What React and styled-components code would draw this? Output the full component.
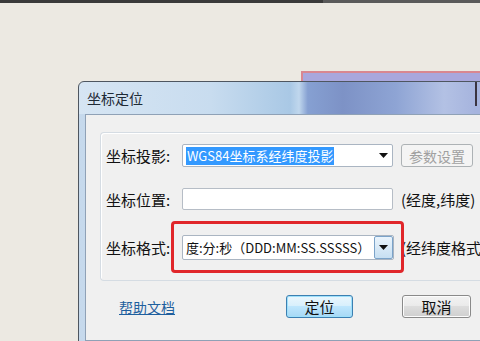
import React from "react";
import styled, { createGlobalStyle } from "styled-components";

const Global = createGlobalStyle`
  html, body { margin: 0; padding: 0; }
  body {
    width: 480px; height: 341px; overflow: hidden;
    background: #ece9e2;
    font-family: "Noto Sans CJK SC", "Microsoft YaHei", sans-serif;
  }
`;

const Desktop = styled.div`
  position: relative;
  width: 480px;
  height: 341px;
  overflow: hidden;
  background: #ece9e2;
`;

const TopStrip = styled.div`
  display: flex;
  height: 3px;
`;
const StripPart = styled.div`
  flex: ${(p) => p.$flex};
  background: ${(p) => p.$color};
`;

const BackWindow = styled.div`
  position: absolute;
  left: 301px;
  top: 71px;
  width: 200px;
  height: 60px;
  border-top: 2px solid #d98791;
  border-left: 2px solid #d98791;
  background: #a9a7dd;
`;

const Dialog = styled.div`
  position: absolute;
  left: 78px;
  top: 81px;
  width: 440px;
  height: 262px;
  border: 1px solid #4e5660;
  border-radius: 6px 6px 0 0;
  display: flex;
  flex-direction: column;
  overflow: hidden;
  background: linear-gradient(90deg, #d6e5f3 0%, #c8dcef 30%, #a9c8e5 48%, #c0d7ed 50%, #86a0d2 52%, #7d92c6 60%, #8ea4d4 72%, #b3c1e4 83%, #a6b4de 90%);
`;

const TitleBar = styled.div`
  height: 32px;
  display: flex;
  align-items: center;
  padding-left: 8px;
  font-size: 14px;
  color: #1e2a36;
  position: relative;
`;

const CloseEdge = styled.div`
  position: absolute;
  left: 396px;
  top: 0;
  width: 2px;
  height: 24px;
  background: #3a3440;
`;

const Frame = styled.div`
  flex: 1;
  display: flex;
  padding: 0 0 3px 6px;
  background: linear-gradient(90deg, #c6d9ec, #b7cde6);
`;

const Client = styled.div`
  flex: 1;
  background: #f0f0f0;
  border-top: 1px solid #8fa1b6;
  border-left: 1px solid #8fa1b6;
  border-bottom: 1px solid #8fa1b6;
  padding: 17px 0 0 14px;
  display: flex;
  flex-direction: column;
`;

const Group = styled.div`
  position: relative;
  height: 136px;
  border: 1px solid #d5dce3;
  border-right: none;
  border-radius: 4px 0 0 4px;
  box-shadow: inset 1px 1px 0 #ffffff;
  padding: 11px 0 0 5px;
  display: flex;
  flex-direction: column;
  flex-shrink: 0;
`;

const Row = styled.div`
  display: flex;
  align-items: center;
  height: ${(p) => p.$h}px;
  margin-top: ${(p) => p.$mt || 0}px;
`;

const Label = styled.div`
  width: 76px;
  font-size: 15px;
  color: #111;
  white-space: nowrap;
`;

const Combo = styled.div`
  width: ${(p) => p.$w}px;
  height: ${(p) => p.$h}px;
  box-sizing: border-box;
  border: 1px solid ${(p) => p.$border || "#aab5c2"};
  border-radius: 2px;
  background: #fff;
  display: flex;
  align-items: center;
  padding-left: 3px;
  font-size: 13px;
  color: #111;
  white-space: nowrap;
  flex-shrink: 0;
`;

const Selected = styled.span`
  background: #3399ff;
  color: #fff;
  padding: 1px 1px;
  line-height: 16px;
`;

const ArrowArea = styled.div`
  margin-left: auto;
  width: 18px;
  height: 100%;
  display: flex;
  align-items: center;
  justify-content: center;
`;

const ArrowButton = styled.div`
  margin-left: auto;
  width: 19px;
  height: 100%;
  box-sizing: border-box;
  border: 1px solid #7ba3c9;
  border-radius: 2px;
  background: linear-gradient(#eaf4fc, #c7dff2);
  display: flex;
  align-items: center;
  justify-content: center;
`;

const Arrow = () => (
  <svg width="9" height="5" viewBox="0 0 9 5">
    <path d="M0 0h9L4.5 5z" fill="#111" />
  </svg>
);

const WinButton = styled.button`
  box-sizing: border-box;
  width: ${(p) => p.$w}px;
  height: 23px;
  margin-left: ${(p) => p.$ml || 0}px;
  border: 1px solid ${(p) => (p.$focus ? "#3c7fb1" : "#8a8a8a")};
  border-radius: 3px;
  background: ${(p) =>
    p.$focus
      ? "linear-gradient(#eaf6fd 0%, #d9f0fc 45%, #bee6fd 50%, #a7d9f5 100%)"
      : "linear-gradient(#f2f2f2 0%, #ebebeb 45%, #dddddd 50%, #cfcfcf 100%)"};
  box-shadow: inset 0 0 0 1px ${(p) => (p.$focus ? "#9ee0fb" : "#fcfcfc")};
  font-family: inherit;
  font-size: 15px;
  color: ${(p) => (p.$disabled ? "#a0a0a0" : "#111")};
  padding: 0;
  display: flex;
  align-items: center;
  justify-content: center;
  flex-shrink: 0;
`;

const DisabledButton = styled(WinButton)`
  border-color: #adb2b5;
  background: #f4f4f4;
  box-shadow: none;
  font-size: 14px;
`;

const SideText = styled.div`
  margin-left: ${(p) => p.$ml || 8}px;
  font-size: 15px;
  color: #111;
  white-space: nowrap;
`;

const RedBox = styled.div`
  position: absolute;
  left: 70px;
  top: 88px;
  width: 233px;
  height: 52px;
  box-sizing: border-box;
  border: 3px solid #e0262a;
  border-radius: 4px;
  pointer-events: none;
`;

const Footer = styled.div`
  display: flex;
  align-items: center;
  height: 23px;
  margin-top: 14px;
  padding-left: 19px;
`;

const HelpLink = styled.a`
  font-size: 14px;
  color: #1f5f9e;
  text-decoration: underline;
  width: 167px;
  white-space: nowrap;
`;

export default function App() {
  return (
    <>
      <Global />
      <Desktop>
        <TopStrip>
          <StripPart $flex="323" $color="#3a3a3a" />
          <StripPart $flex="157" $color="#5a5a5a" />
        </TopStrip>
        <BackWindow />
        <Dialog>
          <TitleBar>
            坐标定位
            <CloseEdge />
          </TitleBar>
          <Frame>
            <Client>
              <Group>
                <Row $h={23}>
                  <Label>坐标投影:</Label>
                  <Combo $w={211} $h={23}>
                    <Selected>WGS84坐标系经纬度投影</Selected>
                    <ArrowArea>
                      <Arrow />
                    </ArrowArea>
                  </Combo>
                  <DisabledButton $w={72} $ml={8} $disabled>
                    参数设置
                  </DisabledButton>
                </Row>
                <Row $h={22} $mt={21}>
                  <Label>坐标位置:</Label>
                  <Combo $w={211} $h={22} $border="#b6bdc6" />
                  <SideText $ml={8}>(经度,纬度)</SideText>
                </Row>
                <Row $h={25} $mt={25}>
                  <Label>坐标格式:</Label>
                  <Combo $w={212} $h={25}>
                    度:分:秒（DDD:MM:SS.SSSSS）
                    <ArrowButton>
                      <Arrow />
                    </ArrowButton>
                  </Combo>
                  <SideText $ml={7}>(经纬度格式</SideText>
                </Row>
                <RedBox />
              </Group>
              <Footer>
                <HelpLink>帮助文档</HelpLink>
                <WinButton $w={67} $focus>
                  定位
                </WinButton>
                <WinButton $w={69} $ml={49}>
                  取消
                </WinButton>
              </Footer>
            </Client>
          </Frame>
        </Dialog>
      </Desktop>
    </>
  );
}
